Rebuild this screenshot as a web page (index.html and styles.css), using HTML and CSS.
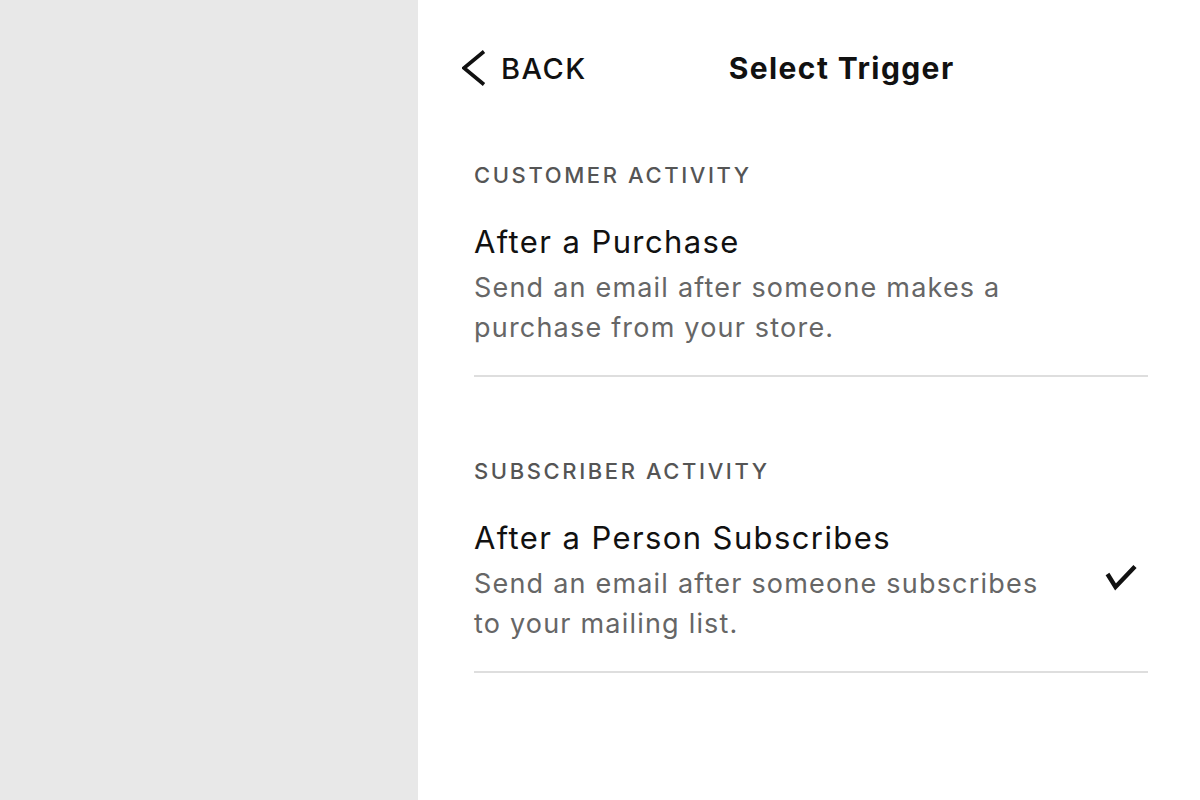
FILE: index.html
```html
<!DOCTYPE html>
<html lang="en">
<head>
<meta charset="utf-8">
<title>Select Trigger</title>
<link rel="stylesheet" href="styles.css">
</head>
<body>
<div class="app">
  <aside class="side"></aside>
  <main class="panel">
    <header class="header">
      <button class="back" type="button">
        <svg class="chev" width="24" height="36" viewBox="0 0 24 36" aria-hidden="true"><path d="M22 1.5 L2 18 L22 34.5" fill="none" stroke="#111" stroke-width="3.6" stroke-linecap="butt" stroke-linejoin="miter"/></svg>
        <span class="back-label">BACK</span>
      </button>
      <h1 class="title">Select Trigger</h1>
    </header>

    <section class="section first">
      <h2 class="label">CUSTOMER ACTIVITY</h2>
      <div class="item">
        <div class="item-text">
          <div class="item-title">After a Purchase</div>
          <div class="item-desc">Send an email after someone makes a<br>purchase from your store.</div>
        </div>
      </div>
    </section>

    <section class="section">
      <h2 class="label">SUBSCRIBER ACTIVITY</h2>
      <div class="item">
        <div class="item-text">
          <div class="item-title">After a Person Subscribes</div>
          <div class="item-desc">Send an email after someone subscribes<br>to your mailing list.</div>
        </div>
        <svg class="check" width="32" height="28" viewBox="0 0 32 28" aria-hidden="true"><path d="M2.5 10 L10.5 23 L30 2.5" fill="none" stroke="#111" stroke-width="4.4" stroke-linecap="butt" stroke-linejoin="miter"/></svg>
      </div>
    </section>
  </main>
</div>
</body>
</html>
```

FILE: styles.css
```css
* { box-sizing: border-box; }
html, body { margin: 0; padding: 0; }
body {
  font-family: Inter, "Noto Sans", sans-serif;
  background: #ffffff;
  color: #111;
}
.app {
  display: flex;
  width: 1200px;
  height: 800px;
}
.side {
  width: 418px;
  flex: none;
  background: #e8e8e8;
}
.panel {
  flex: 1;
  background: #fff;
  padding-right: 52px;
}
.header {
  height: 136px;
  display: flex;
  align-items: center;
  padding-left: 44px;
}
.back {
  display: flex;
  align-items: center;
  gap: 15px;
  background: none;
  border: 0;
  padding: 0;
  font: inherit;
  color: #111;
}
.chev { display: block; }
.back-label {
  font-size: 29px;
  font-weight: 500;
  letter-spacing: 1.5px;
}
.title {
  margin: 0 0 0 142px;
  font-size: 30px;
  font-weight: 700;
  letter-spacing: 1.4px;
}
.section {
  margin-left: 56px;
  padding-top: 82px;
}
.section.first { padding-top: 27px; }
.label {
  margin: 0;
  font-size: 22px;
  line-height: 24px;
  font-weight: 500;
  letter-spacing: 2.6px;
  color: #555;
}
.item {
  margin-top: 37px;
  display: flex;
  align-items: center;
  justify-content: space-between;
  border-bottom: 2px solid #dedede;
  padding-bottom: 27px;
}
.item-title {
  font-size: 31px;
  line-height: 36px;
  font-weight: 400;
  letter-spacing: 1.4px;
  color: #111;
}
.item-desc {
  margin-top: 8px;
  font-size: 27px;
  line-height: 40px;
  letter-spacing: 1.2px;
  color: #666;
}
.check {
  display: block;
  margin: 0 11px 9px 0;
}
```
